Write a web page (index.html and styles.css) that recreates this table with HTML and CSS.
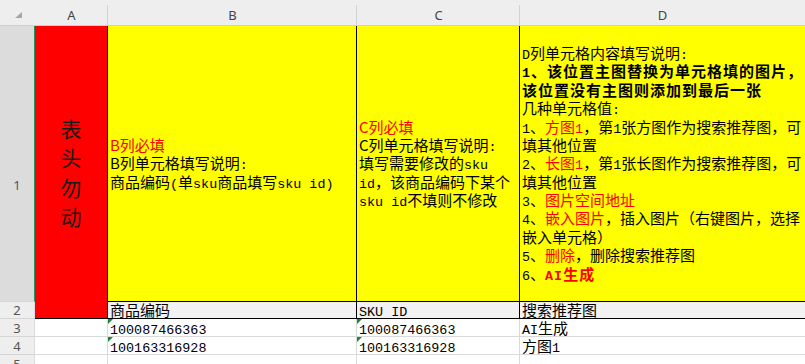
FILE: index.html
```html
<!DOCTYPE html>
<html lang="zh-CN">
<head>
<meta charset="utf-8">
<title>Sheet</title>
<link rel="stylesheet" href="styles.css">
</head>
<body>
<div class="sheet">
  <div class="corner"><svg width="7" height="6" viewBox="0 0 7 6"><polygon points="7,0 7,6 0,6" fill="#a6a6a6"/></svg></div>
  <div class="colhead">A</div>
  <div class="colhead">B</div>
  <div class="colhead">C</div>
  <div class="colhead last">D</div>

  <div class="rowhead r1">1</div>
  <div class="cell a1">
    <div class="vtext"><div>表</div><div>头</div><div>勿</div><div>动</div></div>
  </div>
  <div class="cell y1">
    <div class="lines">
      <div class="red">B列必填</div>
      <div>B列单元格填写说明<span class="en">:</span></div>
      <div>商品编码<span class="en">(</span>单<span class="en">sku</span>商品填写<span class="en">sku id)</span></div>
    </div>
  </div>
  <div class="cell y1">
    <div class="lines">
      <div class="red">C列必填</div>
      <div>C列单元格填写说明<span class="en">:</span></div>
      <div>填写需要修改的<span class="en">sku</span></div>
      <div><span class="en">id</span>，该商品编码下某个</div>
      <div><span class="en">sku id</span>不填则不修改</div>
    </div>
  </div>
  <div class="cell y1 dcol">
    <div class="lines">
      <div><span class="en">D</span>列单元格内容填写说明<span class="en">:</span></div>
      <div class="b"><span class="en">1</span>、该位置主图替换为单元格填的图片，</div>
      <div class="b">该位置没有主图则添加到最后一张</div>
      <div>几种单元格值<span class="en">:</span></div>
      <div><span class="en">1</span>、<span class="red">方图<span class="en">1</span></span>，第<span class="en">1</span>张方图作为搜索推荐图，可</div>
      <div>填其他位置</div>
      <div><span class="en">2</span>、<span class="red">长图<span class="en">1</span></span>，第<span class="en">1</span>张长图作为搜索推荐图，可</div>
      <div>填其他位置</div>
      <div><span class="en">3</span>、<span class="red">图片空间地址</span></div>
      <div><span class="en">4</span>、<span class="red">嵌入图片</span>，插入图片（右键图片，选择</div>
      <div>嵌入单元格）</div>
      <div><span class="en">5</span>、<span class="red">删除</span>，删除搜索推荐图</div>
      <div><span class="en">6</span>、<span class="red b"><span class="en">AI</span>生成</span></div>
    </div>
  </div>

  <div class="rowhead">2</div>
  <div class="cell g2">商品编码</div>
  <div class="cell g2"><span class="en">SKU ID</span></div>
  <div class="cell g2 dcol">搜索推荐图</div>

  <div class="rowhead">3</div>
  <div class="cell plain"></div>
  <div class="cell plain flag"><span class="en">100087466363</span></div>
  <div class="cell plain flag"><span class="en">100087466363</span></div>
  <div class="cell plain dcol"><span class="en">AI</span>生成</div>

  <div class="rowhead">4</div>
  <div class="cell plain"></div>
  <div class="cell plain flag"><span class="en">100163316928</span></div>
  <div class="cell plain flag"><span class="en">100163316928</span></div>
  <div class="cell plain dcol">方图<span class="en">1</span></div>

  <div class="rowhead">5</div>
  <div class="cell plain"></div>
  <div class="cell plain"></div>
  <div class="cell plain"></div>
  <div class="cell plain dcol"></div>
</div>
</body>
</html>
```

FILE: styles.css
```css
html, body {
  margin: 0;
  padding: 0;
  background: #ffffff;
}

body {
  width: 805px;
  height: 364px;
  overflow: hidden;
}

.sheet {
  display: grid;
  grid-template-columns: 35px 73px 249px 163px 285px;
  grid-template-rows: 26px 276px 17px 18px 18px 18px;
  font-family: "Noto Sans CJK SC", sans-serif;
  font-size: 15px;
  color: #000;
}

.sheet > div {
  box-sizing: border-box;
  min-width: 0;
}

.corner {
  background: #eeeeee;
  border-bottom: 1px solid #cfcfcf;
  display: flex;
  justify-content: flex-end;
  align-items: flex-end;
  padding: 0 13px 7px 0;
}

.colhead {
  background: linear-gradient(#d2d2d2, #d2d2d2) right 5px / 1px calc(100% - 5px) no-repeat, #eeeeee;
  border-bottom: 1px solid #cfcfcf;
  display: flex;
  justify-content: center;
  align-items: center;
  padding-top: 4px;
  font-family: "Noto Sans", "Liberation Sans", sans-serif;
  font-size: 13px;
  color: #444444;
}

.colhead.last {
  background: #eeeeee;
}

.rowhead {
  background: #eeeeee;
  border-bottom: 1px solid #d6d6d6;
  border-right: 1px solid #dcdcdc;
  display: flex;
  justify-content: center;
  align-items: center;
  font-family: "Noto Sans", "Liberation Sans", sans-serif;
  font-size: 13px;
  color: #555555;
}

.rowhead.r1 {
  background: #dcdcdc;
  border-right: 1px solid #1f9463;
  padding-top: 43px;
}

.cell {
  white-space: nowrap;
  border-right: 1px solid #d9d9d9;
  border-bottom: 1px solid #d9d9d9;
  padding-left: 2px;
}

.cell.dcol {
  border-right: none;
}

.a1 {
  grid-row: span 2;
  background: #ff0000;
  border-right: 1px solid #000;
  border-bottom: 1px solid #000;
  padding-left: 0;
  display: flex;
  align-items: center;
  justify-content: center;
}

.vtext {
  font-size: 21px;
  line-height: 29.3px;
  color: #1a1a1a;
  text-align: center;
  padding-top: 1px;
}

.y1 {
  background: #ffff00;
  border-right: 1px solid #000;
  border-bottom: 1px solid #000;
  display: flex;
  align-items: center;
}

.lines {
  line-height: 18.3px;
}

.g2 {
  background: #f2f2f2;
  border-right: 1px solid #000;
  border-bottom: 1px solid #000;
  line-height: 16px;
}

.plain {
  line-height: 17px;
}

.flag {
  position: relative;
}

.flag::before {
  content: "";
  position: absolute;
  left: 0;
  top: 0;
  border-top: 5px solid #1c8a2e;
  border-right: 5px solid transparent;
}

.en {
  font-family: "Liberation Mono", monospace;
  font-size: 13.4px;
  line-height: 1;
}

.red {
  color: #ff0000;
}

.b {
  font-weight: 700;
  letter-spacing: 1px;
}
```
